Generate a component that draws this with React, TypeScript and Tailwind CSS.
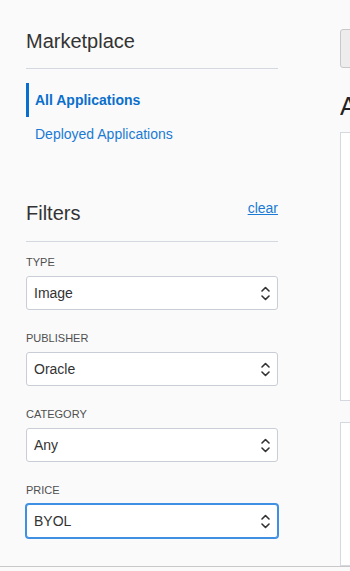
import React from 'react';

const font = { fontFamily: '"Liberation Sans", Arial, sans-serif' };

const UpDown = () => (
  <svg width="9" height="15" viewBox="0 0 9 15" fill="none" stroke="#333" strokeWidth="1.6" strokeLinecap="round" strokeLinejoin="round">
    <path d="M1 5 L4.5 1.5 L8 5" />
    <path d="M1 10 L4.5 13.5 L8 10" />
  </svg>
);

interface FilterProps {
  label: string;
  value: string;
  focused?: boolean;
}

const Filter: React.FC<FilterProps> = ({ label, value, focused }) => (
  <div className="flex flex-col">
    <span className="text-[11px] leading-[13px] text-[#4f4f4f] uppercase">{label}</span>
    <div
      className={`mt-[7px] h-[34px] flex items-center justify-between pl-[7px] pr-[7px] bg-white rounded-[3px] border ${
        focused ? 'border-[#3f8fe2] ring-1 ring-[#3f8fe2]' : 'border-[#c9ced6]'
      }`}
    >
      <span className="text-[14px] text-[#333]">{value}</span>
      <UpDown />
    </div>
  </div>
);

export default function App() {
  return (
    <div className="w-[350px] h-[571px] overflow-hidden bg-[#fafafa]" style={font}>
      <div className="h-[567px] flex border-b border-[#c8c8c8]">
        {/* Sidebar */}
        <aside className="w-[340px] shrink-0 pl-[26px] pr-[62px] pt-[29px]">
          <div className="pb-[15px] border-b border-[#d4d9e0]">
            <h2 className="text-[20px] leading-[24px] text-[#333]">Marketplace</h2>
          </div>
          <nav className="mt-[14px] flex flex-col">
            <a className="h-[34px] flex items-center pl-[6px] border-l-[3px] border-[#0a6fcc] text-[14px] font-bold text-[#0a6fcc]">
              All Applications
            </a>
            <a className="h-[34px] flex items-center pl-[9px] text-[14px] text-[#1a7ad4]">
              Deployed Applications
            </a>
          </nav>

          <div className="mt-[50px] pb-[16px] border-b border-[#d4d9e0] flex justify-between items-start">
            <h2 className="text-[20px] leading-[24px] text-[#333]">Filters</h2>
            <a className="text-[14px] leading-[14px] text-[#1a7ad4] underline">clear</a>
          </div>

          <div className="mt-[14px] flex flex-col gap-[22px]">
            <Filter label="Type" value="Image" />
            <Filter label="Publisher" value="Oracle" />
            <Filter label="Category" value="Any" />
            <Filter label="Price" value="BYOL" focused />
          </div>
        </aside>

        {/* Main */}
        <main className="flex-1 min-w-0 overflow-hidden pt-[29px] flex flex-col">
          <div className="h-[39px] w-[200px] shrink-0 rounded-[3px] border border-[#c8c8c8] bg-[#ededed]" />
          <h1 className="mt-[23px] text-[25px] leading-[30px] text-[#222] whitespace-nowrap">All Applications</h1>
          <div className="mt-[11px] h-[269px] shrink-0 w-[300px] bg-white border border-[#d4d9e0]" />
          <div className="mt-[21px] flex-1 w-[300px] bg-white border border-[#d4d9e0]" />
        </main>
      </div>
    </div>
  );
}
